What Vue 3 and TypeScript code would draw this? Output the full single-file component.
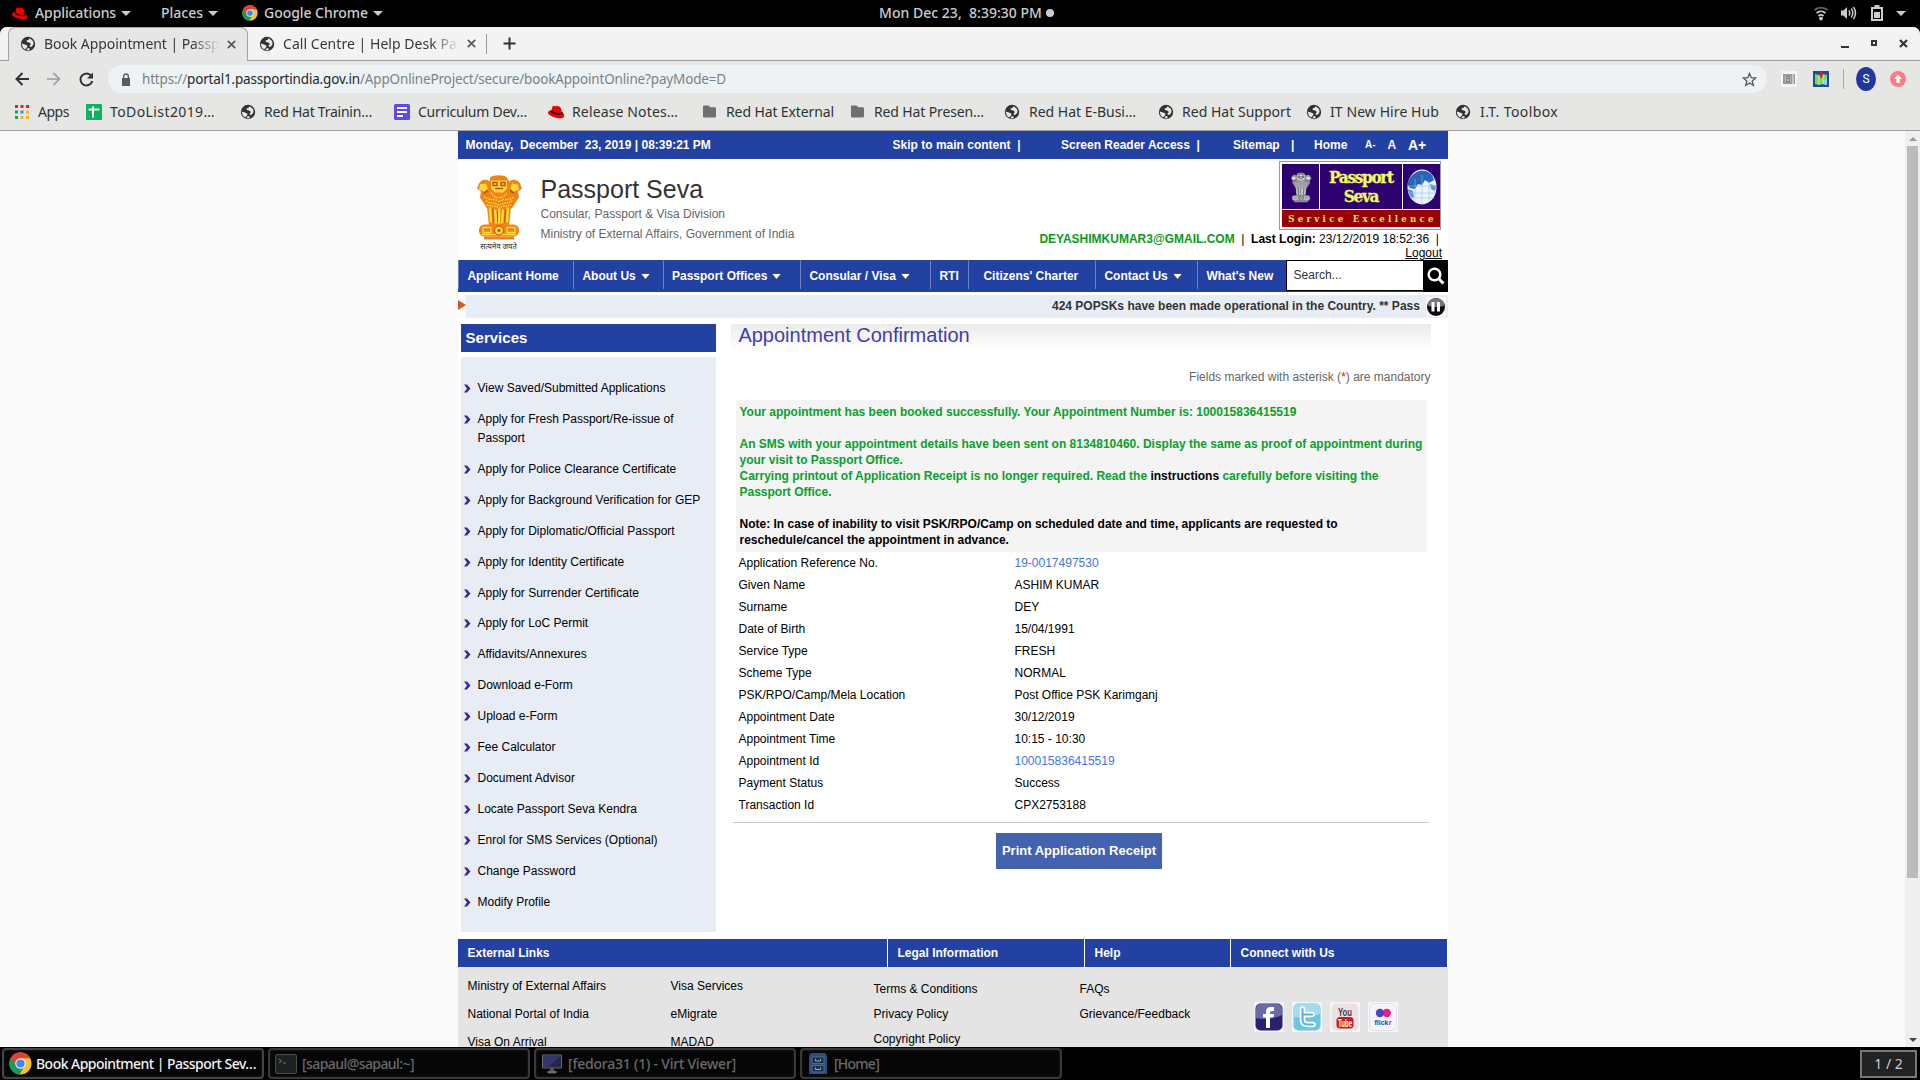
<script setup lang="ts">
type Fit = { text: string; w: number }
type Bookmark = Fit & { icon: 'apps' | 'sheet' | 'globe' | 'doc' | 'hat' | 'folder'; span: number; gap: number }

// Tracks a label in or out so that it fills the given width in pixels.
const vFit = {
  mounted(el: HTMLElement, binding: { value: number }) {
    const count = (el.textContent ?? '').length
    const natural = el.getBoundingClientRect().width
    if (count && natural) el.style.letterSpacing = `${(binding.value - natural) / count}px`
  },
}

const bookmarks: Bookmark[] = [
  { icon: 'apps', text: 'Apps', w: 31, span: 71, gap: 9 },
  { icon: 'sheet', text: 'ToDoList2019…', w: 105, span: 154, gap: 8 },
  { icon: 'globe', text: 'Red Hat Trainin…', w: 108, span: 154, gap: 8 },
  { icon: 'doc', text: 'Curriculum Dev…', w: 109, span: 154, gap: 8 },
  { icon: 'hat', text: 'Release Notes…', w: 106, span: 154, gap: 8 },
  { icon: 'folder', text: 'Red Hat External', w: 108, span: 148, gap: 9 },
  { icon: 'folder', text: 'Red Hat Presen…', w: 110, span: 154, gap: 9 },
  { icon: 'globe', text: 'Red Hat E-Busi…', w: 107, span: 154, gap: 9 },
  { icon: 'globe', text: 'Red Hat Support', w: 109, span: 148, gap: 8 },
  { icon: 'globe', text: 'IT New Hire Hub', w: 109, span: 149, gap: 8 },
  { icon: 'globe', text: 'I.T. Toolbox', w: 78, span: 120, gap: 9 },
]

const nav = [
  { text: 'Applicant Home', w: 115, pad: 8.4, drop: false },
  { text: 'About Us', w: 90, pad: 8.4, drop: true },
  { text: 'Passport Offices', w: 137, pad: 8, drop: true },
  { text: 'Consular / Visa', w: 130, pad: 8.4, drop: true },
  { text: 'RTI', w: 38, pad: 8.4, drop: false },
  { text: "Citizens' Charter", w: 127, pad: 14.4, drop: false },
  { text: 'Contact Us', w: 102, pad: 8.4, drop: true },
  { text: "What's New", w: 89, pad: 8.4, drop: false },
]

const services = [
  'View Saved/Submitted Applications',
  'Apply for Fresh Passport/Re-issue of Passport',
  'Apply for Police Clearance Certificate',
  'Apply for Background Verification for GEP',
  'Apply for Diplomatic/Official Passport',
  'Apply for Identity Certificate',
  'Apply for Surrender Certificate',
  'Apply for LoC Permit',
  'Affidavits/Annexures',
  'Download e-Form',
  'Upload e-Form',
  'Fee Calculator',
  'Document Advisor',
  'Locate Passport Seva Kendra',
  'Enrol for SMS Services (Optional)',
  'Change Password',
  'Modify Profile',
]

const details = [
  { label: 'Application Reference No.', value: '19-0017497530', link: true },
  { label: 'Given Name', value: 'ASHIM KUMAR' },
  { label: 'Surname', value: 'DEY' },
  { label: 'Date of Birth', value: '15/04/1991' },
  { label: 'Service Type', value: 'FRESH' },
  { label: 'Scheme Type', value: 'NORMAL' },
  { label: 'PSK/RPO/Camp/Mela Location', value: 'Post Office PSK Karimganj' },
  { label: 'Appointment Date', value: '30/12/2019' },
  { label: 'Appointment Time', value: '10:15 - 10:30' },
  { label: 'Appointment Id', value: '100015836415519', link: true },
  { label: 'Payment Status', value: 'Success' },
  { label: 'Transaction Id', value: 'CPX2753188' },
]

const footerHeads = [
  { text: 'External Links', w: 430 },
  { text: 'Legal Information', w: 197 },
  { text: 'Help', w: 146 },
  { text: 'Connect with Us', w: 216 },
]

const footerCols = [
  { w: 203, step: 28, top: 9, links: ['Ministry of External Affairs', 'National Portal of India', 'Visa On Arrival'] },
  { w: 203, step: 28, top: 9, links: ['Visa Services', 'eMigrate', 'MADAD'] },
  { w: 206, step: 25, top: 12, links: ['Terms & Conditions', 'Privacy Policy', 'Copyright Policy'] },
  { w: 175, step: 25, top: 12, links: ['FAQs', 'Grievance/Feedback'] },
]
</script>

<template>
  <div class="screen">
    <svg class="defs" width="0" height="0">
      <defs>
        <symbol id="globe" viewBox="0 0 16 16">
          <circle cx="8" cy="8" r="7.2" fill="#2e3436" />
          <path d="M9.6 2.2 13 5l.6 3-1.6 2.6-2 .4-.4-1.6L11 8 9.2 6.4 7 6l-.6-1.6L8.4 4z" fill="#e8e8e7" />
          <path d="M1.6 7.6 5 8.4l2.6 1.4L7 11.4l-2 2.2-2.2-2z M6.4 14.3l1.4-2.2 2 .4-.6 2z" fill="#e8e8e7" />
        </symbol>
        <symbol id="chrome" viewBox="0 0 48 48">
          <circle cx="24" cy="24" r="23" fill="#fbc02d" />
          <path d="M24 24 4 12.5A23 23 0 0 1 44 12.5H24z" fill="#db4437" />
          <path d="M4 12.5A23 23 0 0 0 22 47l10-17.5-8 3.5-8.5-4.5z" fill="#0f9d58" />
          <path d="M4 12.5 15 30 24 13h20A23 23 0 0 0 4 12.5z" fill="#db4437" />
          <circle cx="24" cy="24" r="11" fill="#f1f1f1" />
          <circle cx="24" cy="24" r="8.6" fill="#4285f4" />
        </symbol>
        <symbol id="hat" viewBox="0 0 18 16">
          <path d="M1 8.5c0-1.6 2-2.2 3.4-2l1.2-4C6 1.400 7 1.800 8 2.200c1 .4 1.600-.6 2.800-.3 1.800.4 2.800 1.200 3.200 2.700l.8 3.400c1.500 1 2.700 2.400 2.500 4-.4 2.600-4.200 2.700-7.600 1.900C5.500 12.900 1 11 1 8.500z" fill="#e00" />
          <path d="M4.400 6.500c-.2 2.600 6.500 4.400 9.600 3.600.9-.3 1-1.200.8-2.100" fill="none" class="hat-band" stroke-width="1.500" />
        </symbol>
        <symbol id="folder" viewBox="0 0 15 14">
          <path d="M1 .5h5.500l2 2H13a1.500 1.500 0 0 1 1.500 1.500v8A1.500 1.500 0 0 1 13 13.500H2A1.500 1.500 0 0 1 .5 12V1z" fill="#6b7071" />
        </symbol>
        <symbol id="emblem" viewBox="0 0 48 64">
          <path d="M15 3c3-3 14-3 17 0l2 4c4-3 9-2 11 2l2 5-4 3 1 6-4 6-3 5H12l-3-5-4-6 1-6-4-3 2-5c2-4 7-5 11-2z" fill="var(--e1)" />
          <path d="M12 32h24l-2 20H14z" fill="var(--e1)" />
          <path d="M16 6h16v8l-4 4h-8l-4-4zM5 10l6-1 2 5-4 3-5-2zM43 10l-6-1-2 5 4 3 5-2z" fill="var(--e2)" />
          <path d="M18 8h4v3h-4zM26 8h4v3h-4zM20 14h8M9 19l4-3M39 19l-4-3" fill="none" stroke="var(--e3)" stroke-width="1.300" />
          <path d="M9 22c5 5 9 1 15 5 6-4 10 0 15-5M11 26c4 4 8 1 13 5 5-4 9-1 13-5M12 30c5 3 8 0 12 4 4-4 7-1 12-4M16 18c2 4 5 5 8 5s6-1 8-5" fill="none" stroke="var(--e2)" stroke-width="1.500" stroke-dasharray="1.500 1" />
          <path d="M15 33l1 15M20 35l1 14M24 35v14M28 35l-1 14M33 33l-1 15" fill="none" stroke="var(--e2)" stroke-width="2.500" />
          <path d="M17.500 34l1 14M22.500 36v12M30.500 35l-1 13" fill="none" stroke="var(--e3)" stroke-width=".9" />
          <rect x="4" y="50" width="40" height="12" rx="5.500" fill="var(--e1)" />
          <path d="M9 62h30v3H9z" fill="var(--e1)" />
          <path d="M8 53h8v5H8zM32 53h8v5h-8zM7 60h34" fill="none" stroke="var(--e2)" stroke-width="1.400" />
          <circle cx="24" cy="56" r="4.500" fill="var(--e2)" stroke="var(--e3)" />
          <circle cx="24" cy="56" r="1.500" fill="var(--e3)" />
        </symbol>
      </defs>
    </svg>

    <!-- GNOME panel -->
    <div class="panel">
      <svg class="p-hat" width="17" height="15"><use href="#hat" /></svg>
      <span v-fit="81" class="fit">Applications</span><i class="tri" />
      <span v-fit="42" class="fit places">Places</span><i class="tri" />
      <svg class="p-chrome" width="16" height="16"><use href="#chrome" /></svg>
      <span v-fit="104" class="fit">Google Chrome</span><i class="tri" />
      <div class="clock"><span v-fit="163" class="fit">Mon Dec 23,&nbsp; 8:39:30 PM</span><i /></div>
      <div class="tray">
        <svg width="16" height="16" viewBox="0 0 16 16" fill="none" stroke="#ccc" stroke-width="1.800">
          <path d="M1.500 5.200C5 1.800 11 1.800 14.500 5.200" stroke="#666" />
          <path d="M3.500 8.200c2.600-2.500 6.400-2.500 9 0M5.500 11c1.500-1.400 3.500-1.400 5 0" /><circle cx="8" cy="13.600" r="1" fill="#ccc" />
        </svg>
        <svg width="17" height="16" viewBox="0 0 17 16" fill="none" stroke="#ccc" stroke-width="1.500">
          <path d="M1 5.500h2.500L7 2v12L3.500 10.500H1z" fill="#ccc" stroke="none" /><path d="M9 5.500q1.500 2.500 0 5M11.300 3.500q3 4.500 0 9M13.500 1.800q4 6.200 0 12.400" />
        </svg>
        <svg width="12" height="16" viewBox="0 0 12 16"><path d="M3.500 0h5v2H12v14H0V2h3.500zM2 4v10h8V4z" fill="#ccc" fill-rule="evenodd" /><path d="M3 7h6v6H3z" fill="#ccc" /></svg>
        <i class="tri" />
      </div>
    </div>

    <!-- Browser window -->
    <div class="window">
      <div class="tabs">
        <div class="tab active">
          <svg width="16" height="16"><use href="#globe" /></svg>
          <div class="tab-text"><span v-fit="206" class="fit">Book Appointment | Passport S</span></div>
          <svg class="x" width="9" height="9" viewBox="0 0 9 9"><path d="M.8.8l7.400 7.400M8.200.8.8 8.200" stroke="#55595b" stroke-width="1.700" /></svg>
        </div>
        <div class="tab idle">
          <svg width="16" height="16"><use href="#globe" /></svg>
          <div class="tab-text"><span v-fit="196" class="fit">Call Centre | Help Desk Passp</span></div>
          <svg class="x" width="9" height="9" viewBox="0 0 9 9"><path d="M.8.8l7.400 7.400M8.200.8.8 8.200" stroke="#55595b" stroke-width="1.700" /></svg>
        </div>
        <i class="tab-sep" />
        <svg class="plus" width="13" height="13" viewBox="0 0 13 13"><path d="M6.500.5v12M.5 6.500h12" stroke="#2e3436" stroke-width="2" /></svg>
        <div class="controls">
          <svg width="8" height="10"><path d="M0 8h8v2H0z" fill="#2e3436" /></svg>
          <svg width="6" height="6" viewBox="0 0 6 6"><path d="M1 1h4v4H1z" fill="none" stroke="#2e3436" stroke-width="2" /></svg>
          <svg width="9" height="9" viewBox="0 0 9 9"><path d="M1 1l7 7M8 1 1 8" stroke="#2e3436" stroke-width="2.200" /></svg>
        </div>
      </div>

      <div class="toolbar">
        <svg class="back" width="14" height="14" viewBox="0 0 14 14" fill="none" stroke="#2e3436" stroke-width="2"><path d="M14 7H1.500M7.500 1l-6 6 6 6" /></svg>
        <svg class="fwd" width="14" height="14" viewBox="0 0 14 14" fill="none" stroke="#9b9d9d" stroke-width="1.700"><path d="M0 7h12.500M6.500 1l6 6-6 6" /></svg>
        <svg class="reload" width="15" height="15" viewBox="0 0 15 15"><path d="M12.200 3.700A6 6 0 1 0 13.300 9" fill="none" stroke="#2e3436" stroke-width="2" /><path d="M14 .5v6H8z" fill="#2e3436" /></svg>
        <div class="omnibox">
          <svg class="lock" width="10" height="13" viewBox="0 0 10 13"><path d="M1 5h8v8H1z" fill="#5a5e61" /><path d="M2.700 6V3.300a2.300 2.300 0 0 1 4.600 0V6" fill="none" stroke="#5a5e61" stroke-width="1.400" /></svg>
          <span v-fit="45" class="fit dim">https://</span><span v-fit="173" class="fit host">portal1.passportindia.gov.in</span><span v-fit="366" class="fit dim">/AppOnlineProject/secure/bookAppointOnline?payMode=D</span>
          <svg class="star" width="15" height="15" viewBox="0 0 15 15"><path d="M7.500 1.500 9.200 5.700l4.500.3-3.500 2.900 1.100 4.400-3.800-2.400-3.800 2.400 1.100-4.400L1.300 6l4.500-.3z" fill="none" stroke="#55595c" stroke-width="1.300" /></svg>
        </div>
        <svg class="ext-b" width="16" height="16" viewBox="0 0 16 16"><path d="M0 0h16v16H0z" fill="#f4f4f4" /><path d="M2 3h9.500v10H2zM12.500 3H14v10h-1.500z" fill="#999" /><path d="M4 5h5.500v6H4z" fill="#e4e4e4" /><text x="4" y="11.300" font-size="8.500" font-weight="700" fill="#777">B</text></svg>
        <svg class="ext-m" width="16" height="16" viewBox="0 0 16 16"><path d="M0 0h16v16H0z" fill="#174ea0" /><path d="M2 3l4 1 4-1 4 1v10l-4-1-4 1-4-1z" fill="#7ed957" /><path d="M10 9l4-1v6l-4-1z" fill="#8fd0ff" /><path d="M6 4v10M10 3v10" stroke="#e8ffe0" stroke-width=".6" /><path d="M8.200 8 6.300 3.500a2 2 0 1 1 3.800 0z" fill="#d6201b" /></svg>
        <i class="tb-sep" />
        <span class="avatar">S</span>
        <svg class="update" width="16" height="16" viewBox="0 0 16 16"><circle cx="8" cy="8" r="8" fill="#ff7b84" /><path d="M8 3.500l4 4.300H9.600V12H6.400V7.800H4z" fill="#fff" /></svg>
      </div>

      <div class="bookmarks">
        <div v-for="(b, i) in bookmarks" :key="i" class="bm" :style="{ width: b.span + 'px', columnGap: b.gap + 'px' }">
          <svg v-if="b.icon === 'apps'" width="14" height="14" viewBox="0 0 14 14">
            <path d="M0 0h3v3H0zM5.500 0h3v3h-3zM11 0h3v3h-3z" fill="#ea1f2d" />
            <path d="M0 5.500h3v3H0z" fill="#12a558" /><path d="M5.500 5.500h3v3h-3z" fill="#4688f4" /><path d="M11 5.500h3v3h-3zM5.500 11h3v3h-3zM11 11h3v3h-3z" fill="#f7b42a" /><path d="M0 11h3v3H0z" fill="#12a558" />
          </svg>
          <svg v-else-if="b.icon === 'sheet'" width="16" height="16" viewBox="0 0 16 16"><rect width="16" height="16" rx="1" fill="#0eb25c" /><path d="M2.500 5.500h11M7 2.500v11" stroke="#fff" stroke-width="2" /></svg>
          <svg v-else-if="b.icon === 'doc'" width="16" height="16" viewBox="0 0 16 16"><rect width="16" height="16" rx="1.500" fill="#5b4be8" /><path d="M3 4h10M3 8h10M3 12h6" stroke="#fff" stroke-width="1.900" /></svg>
          <svg v-else-if="b.icon === 'hat'" class="bm-hat" width="18" height="16"><use href="#hat" /></svg>
          <svg v-else-if="b.icon === 'folder'" width="15" height="13"><use href="#folder" /></svg>
          <svg v-else width="16" height="16"><use href="#globe" /></svg>
          <span v-fit="b.w" class="fit">{{ b.text }}</span>
        </div>
      </div>

      <!-- Page -->
      <div class="viewport">
        <div class="page">
          <div class="topline">
            <span class="date">Monday,&nbsp; December&nbsp; 23, 2019 | 08:39:21 PM</span>
            <span class="t-skip">Skip to main content&nbsp; |</span>
            <span class="t-reader">Screen Reader Access&nbsp; |</span>
            <span class="t-map">Sitemap</span><span class="t-bar">|</span>
            <span class="t-home">Home</span>
            <span class="a-small">A-</span><span class="a-mid">A</span><span class="a-big">A+</span>
          </div>

          <div class="header">
            <div class="crest">
              <svg width="48" height="69"><use href="#emblem" width="48" height="69" /></svg>
              <small>सत्यमेव जयते</small>
            </div>
            <div class="brand">
              <h1>Passport Seva</h1>
              <p>Consular, Passport &amp; Visa Division</p>
              <p>Ministry of External Affairs, Government of India</p>
            </div>
            <div class="account">
              <div class="logo">
                <div class="cell lion"><svg width="22" height="38"><use href="#emblem" width="22" height="38" /></svg></div>
                <div class="cell name">Passport<br />Seva</div>
                <div class="cell globe">
                  <svg width="30" height="36" viewBox="0 0 30 36">
                    <ellipse cx="15" cy="18" rx="14.500" ry="17.500" fill="#e9f3fb" />
                    <path d="M3 9C8 1 19-1 25 6l2 5-5 3-4-3-3 5-4-1-3 5-5-1-3-4z" fill="#2a63b8" />
                    <path d="M1 20l5 2 1 6-2 1C2 26 1 23 1 20zM23 15l6 2-1 5-4-2z" fill="#5a94d4" />
                    <path d="M8 34V10M15 35V6M22 33V12M1 24h28M3 29h24M1 17h28" stroke="#9cc3e6" stroke-width=".6" fill="none" />
                  </svg>
                </div>
                <div class="cell motto">Service Excellence</div>
              </div>
              <p class="login"><b class="mail">DEYASHIMKUMAR3@GMAIL.COM</b><span>&nbsp; |&nbsp; </span><b>Last Login:</b> 23/12/2019 18:52:36&nbsp; |<span class="endpad" /></p>
              <p class="logout">Logout</p>
            </div>
          </div>

          <div class="nav">
            <div v-for="n in nav" :key="n.text" class="nav-item" :style="{ width: n.w + 'px', paddingLeft: n.pad + 'px' }">
              {{ n.text }}<svg v-if="n.drop" width="11" height="7" viewBox="0 0 11 7"><path d="M.5.500h10l-5 6z" fill="#fff" stroke="#333" stroke-width=".8" /></svg>
            </div>
            <div class="search">Search...</div>
            <div class="go"><svg width="18" height="18" viewBox="0 0 18 18" fill="none" stroke="#fff"><circle cx="7.500" cy="7.500" r="5.800" stroke-width="2.400" /><path d="M11.800 11.800l4.700 4.700" stroke-width="3" /></svg></div>
          </div>

          <div class="ticker">
            <div class="flag"><svg width="8" height="10"><path d="M0 0l8 5-8 5z" fill="#cf5a28" /></svg></div>
            <span>424 POPSKs have been made operational in the Country. ** Pass</span>
            <svg width="20" height="20" viewBox="0 0 20 20"><path d="M0 0h20v20H0z" fill="#f4f6f9" /><circle cx="10" cy="10" r="9" fill="#0c0c0c" /><path d="M1.500 8.500a8.600 8.600 0 0 1 17 0q-8.500 3-17 0z" fill="#777" /><path d="M7 5v9.500M12.500 5v9.500" stroke="#fff" stroke-width="3" /></svg>
          </div>

          <div class="columns">
            <div class="side">
              <h2>Services</h2>
              <ul>
                <li v-for="s in services" :key="s"><svg width="7" height="9" viewBox="0 0 7 9"><path d="M0 .5h3L6.500 4.500 3 8.500H0l3-4z" fill="#3a2a96" /></svg><span>{{ s }}</span></li>
              </ul>
            </div>
            <div class="main">
              <h2>Appointment Confirmation</h2>
              <p class="hint">Fields marked with asterisk (<em>*</em>) are mandatory</p>
              <div class="notice">
                Your appointment has been booked successfully. Your Appointment Number is: 100015836415519<br /><br />
                An SMS with your appointment details have been sent on 8134810460. Display the same as proof of appointment during<br />your visit to Passport Office.<br />
                Carrying printout of Application Receipt is no longer required. Read the <b>instructions</b> carefully before visiting the<br />Passport Office.<br /><br />
                <b>Note: In case of inability to visit PSK/RPO/Camp on scheduled date and time, applicants are requested to<br />reschedule/cancel the appointment in advance.</b>
              </div>
              <div class="details">
                <div v-for="d in details" :key="d.label" class="row"><span>{{ d.label }}</span><span :class="{ link: d.link }">{{ d.value }}</span></div>
              </div>
              <div class="actions"><button>Print Application Receipt</button></div>
            </div>
          </div>

          <div class="foot-head"><div v-for="h in footerHeads" :key="h.text" :style="{ width: h.w + 'px' }">{{ h.text }}</div></div>
          <div class="foot">
            <div v-for="(c, i) in footerCols" :key="i" :style="{ width: c.w + 'px', paddingTop: c.top + 'px' }">
              <p v-for="l in c.links" :key="l" :style="{ height: c.step + 'px' }">{{ l }}</p>
            </div>
            <div class="social">
              <svg width="30" height="30" viewBox="0 0 30 30"><path d="M0 0h30v30H0z" fill="#f4f4f7" /><rect x="1.500" y="1.500" width="27" height="27" rx="5" fill="#2a2070" /><path d="M2 7q0-5 5-5h16q5 0 5 5v6q-13 6-26 3z" fill="#6b6aa6" /><path d="M12 26V15.500H9V12h3V9.500Q12 5 16.500 5H20v4h-2q-2 0-2 1.500V12h4l-.6 3.500H16V26z" fill="#fff" /></svg>
              <svg width="30" height="30" viewBox="0 0 30 30"><path d="M0 0h30v30H0z" fill="#f1f6f8" /><rect x="1.500" y="1.500" width="27" height="27" rx="5" fill="#6dc6e0" /><path d="M2 7q0-5 5-5h16q5 0 5 5v5q-13 5-26 3z" fill="#a5dbea" /><path d="M10.500 7v10.500q0 5 5 5H21M10.500 12.500H20" fill="none" stroke="#fff" stroke-width="5.500" stroke-linecap="round" /><path d="M10.500 7v10.500q0 5 5 5H21M10.500 12.500H20" fill="none" stroke="#52b9d8" stroke-width="2.200" stroke-linecap="round" /></svg>
              <svg width="30" height="30" viewBox="0 0 30 30"><path d="M0 0h30v30H0z" fill="#faf4f5" /><rect x="1.500" y="1.500" width="27" height="27" rx="5" fill="#e9e2e4" /><rect x="6.500" y="15" width="17" height="11.500" rx="3.500" fill="#c01c26" /><text x="15" y="14" text-anchor="middle" font-size="11" textLength="14" lengthAdjust="spacingAndGlyphs" font-weight="700" fill="#4c3336">You</text><text x="15" y="24.500" text-anchor="middle" font-size="10" textLength="14" lengthAdjust="spacingAndGlyphs" font-weight="700" fill="#fff">Tube</text></svg>
              <svg width="30" height="30" viewBox="0 0 30 30"><path d="M0 0h30v30H0z" fill="#faf6fa" /><rect x="1.500" y="1.500" width="27" height="27" rx="5" fill="#f7f3fa" stroke="#e6dde8" /><circle cx="18.800" cy="11" r="4.200" fill="#ec1f87" /><circle cx="12" cy="11" r="4.200" fill="#5244c0" /><text x="6.500" y="23" font-size="8" textLength="14" lengthAdjust="spacingAndGlyphs" font-weight="700" fill="#2b3fa8">flick</text><text x="20.700" y="23" font-size="8" font-weight="700" fill="#ec1f87">r</text></svg>
            </div>
          </div>
        </div>
        <div class="scrollbar"><i class="up" /><i class="thumb" /><i class="down" /></div>
      </div>
    </div>

    <!-- Window list -->
    <div class="tasks">
      <div class="task on"><svg width="23" height="23"><use href="#chrome" /></svg><span v-fit="220" class="fit">Book Appointment | Passport Sev…</span></div>
      <div class="task"><svg width="22" height="20" viewBox="0 0 22 20"><rect x=".5" y=".5" width="21" height="19" rx="1.500" fill="#1d2223" stroke="#4a4d4e" /><path d="M4 5l2.500 2L4 9M8 9h3" stroke="#777" fill="none" /></svg><span v-fit="112" class="fit">[sapaul@sapaul:~]</span></div>
      <div class="task wide"><svg width="20" height="20" viewBox="0 0 20 20"><path d="M.5 1h19v13H.5z" fill="#24264f" stroke="#66686a" /><path d="M1 1.500h18L6 13.500H1z" fill="#34366a" /><path d="M8 14h4v3H8z" fill="#555" /><ellipse cx="10" cy="18" rx="5" ry="1.500" fill="#66686a" /></svg><span v-fit="168" class="fit">[fedora31 (1) - Virt Viewer]</span></div>
      <div class="task home"><svg width="18" height="21" viewBox="0 0 18 21"><path d="M2 0h14l2 2.500V21H0V2.500z" fill="#2c4d78" /><path d="M3 4h12v6.500H3zM3 12.500h12V19H3z" fill="#1b2f4d" stroke="#4b6f9c" /><path d="M6.500 6v2h5V6M6.500 14.500v2h5v-2" fill="none" stroke="#aaa" /></svg><span v-fit="45" class="fit">[Home]</span></div>
      <div class="pager">1 / 2</div>
    </div>
  </div>
</template>

<style>
body { margin: 0; background: #000; overflow: hidden; }
</style>

<style scoped>
* { box-sizing: border-box; }
.screen { width: 1920px; height: 1080px; overflow: hidden; display: flex; flex-direction: column; background: #000; font: 14px/20px "Noto Sans", "Open Sans", sans-serif; }
.defs { position: absolute; }
svg { display: block; flex: none; }
p, h1, h2, ul { margin: 0; padding: 0; font-weight: 400; }
.fit { display: inline-block; white-space: pre; flex: none; }
.hat-band { stroke: #111; }

.panel { height: 27px; flex: none; display: flex; align-items: center; color: #ccc; font-weight: 500; padding: 0 14px 1px 11px; }
.p-hat { margin-right: 7px; }
.tri { width: 0; height: 0; border: 5px solid transparent; border-top-color: #ccc; border-bottom: 0; margin-left: 5px; }
.places { margin-left: 30px; }
.p-chrome { margin: 0 6px 0 24px; }
.clock { margin-left: 496px; display: flex; align-items: center; }
.clock i { width: 8px; height: 8px; border-radius: 50%; background: #ccc; margin-left: 4px; }
.tray { margin-left: auto; display: flex; align-items: center; }
.tray svg:nth-child(2) { margin-left: 11px; }
.tray svg:nth-child(3) { margin-left: 14px; }
.tray .tri { margin-left: 13px; }

.window { height: 1020px; flex: none; display: flex; flex-direction: column; background: #e6e6e4; border-radius: 7px 7px 0 0; overflow: hidden; color: #2e3436; }
.tabs { height: 34px; flex: none; display: flex; background: linear-gradient(#f3f3f3 32px, #e2e2e6 33px, #9c9c9f 33px); }
.tab { display: flex; align-items: center; height: 34px; padding-bottom: 1px; }
.tab.active { width: 240px; margin-left: 8px; padding: 0 11px 1px; background: #e6e6e4; border: 1px solid #a2a2a2; border-bottom: 0; border-radius: 7px 7px 0 0; }
.tab.idle { width: 229px; padding-left: 11px; }
.tab-text { width: 176px; margin-left: 8px; overflow: hidden; color: #33393b; -webkit-mask-image: linear-gradient(90deg, #000 148px, transparent 176px); mask-image: linear-gradient(90deg, #000 148px, transparent 176px); }
.x { margin-left: 8px; }
.tab-sep { width: 1px; height: 20px; margin: 7px 0 0 9px; background: #999; }
.plus { margin: 10px 0 0 16px; }
.controls { margin: 0 12px 0 auto; display: flex; align-items: center; height: 32px; }
.controls svg:nth-child(2) { margin-left: 22px; }
.controls svg:nth-child(3) { margin-left: 22px; }

.toolbar { height: 36px; flex: none; display: flex; align-items: center; padding-left: 15px; }
.fwd { margin-left: 18px; }
.reload { margin-left: 18px; }
.omnibox { width: 1659px; height: 28px; margin-left: 14px; border-radius: 14px; background: #edf2f4; display: flex; align-items: center; padding-left: 13px; font-size: 13.5px; }
.lock { margin-right: 11px; }
.dim { color: #7d8284; }
.host { color: #24292b; }
.star { margin: 0 10px 0 auto; }
.ext-b { margin-left: 14px; }
.ext-m { margin-left: 16px; }
.tb-sep { width: 1px; height: 20px; background: #aaa; margin-left: 14px; }
.avatar { width: 20px; height: 24px; margin-left: 12px; border-radius: 50%; background: #22379b; color: #fff; font: 12px/24px Roboto, sans-serif; text-align: center; }
.update { margin-left: 14px; }

.bookmarks { height: 34px; flex: none; display: flex; align-items: center; padding: 0 0 4px 15px; border-bottom: 1px solid #a0a0a0; }
.bm { display: flex; align-items: center; flex: none; }
.bm-hat { margin: 0 -1px 0 -1px; }

.viewport { height: 916px; display: flex; background: #fafafa; overflow: hidden; color: #000; font: 12px/16px "Liberation Sans", Arial, sans-serif; }
.page { width: 990px; height: 916px; margin-left: 458px; background: #fff; overflow: hidden; flex: none; }
.scrollbar { width: 15px; margin-left: auto; background: #efefef; display: flex; flex-direction: column; align-items: center; }
.scrollbar .thumb { width: 11px; height: 732px; background: #bbb; margin-top: 5px; }
.up { border: 4px solid transparent; border-top: 0; border-bottom-color: #999; margin-top: 6px; }
.down { border: 4px solid transparent; border-bottom: 0; border-top-color: #444; margin: auto 0 5px; }

.topline { height: 28px; display: flex; align-items: center; background: #2340a3; color: #fff; font-weight: 700; padding-left: 7.6px; white-space: nowrap; }
.date { width: 427px; }
.t-skip { width: 168.4px; }
.t-reader { width: 172px; }
.t-map { width: 58px; }
.t-bar { width: 23px; }
.t-home { width: 51px; }
.a-small { width: 22.600px; font-size: 10px; }
.a-mid { width: 20.400px; }
.a-big { font-size: 14px; }

.header { height: 101px; display: flex; }
.crest { width: 48px; margin: 13px 18px 0 16.500px; --e1: #ee8418; --e2: #ffd83a; --e3: #b84a10; }
.crest small { display: block; font: 7.5px/10px "Noto Sans", sans-serif; text-align: center; white-space: nowrap; color: #222; }
.brand { padding-top: 16px; color: #666; }
.brand h1 { font-size: 25px; line-height: 28px; color: #333; }
.brand p { line-height: 20px; }
.brand h1 + p { margin-top: 1px; }
.account { margin-left: auto; padding: 2px 6px 0 0; display: flex; flex-direction: column; align-items: flex-end; }
.logo { width: 162px; height: 69px; flex: none; margin-right: 1px; padding: 2px; border: 1px solid #999; background: #fff; display: grid; grid-template: 45px 17px / 37px 82px 37px; gap: 1px; }
.cell { background: #2d006f; display: flex; align-items: center; justify-content: center; text-align: center; overflow: hidden; }
.lion { --e1: #8f8f95; --e2: #d8d8dc; --e3: #222; }
.name { color: #f4fa62; font: 700 17px/19px "DejaVu Serif Condensed", "DejaVu Serif", serif; letter-spacing: -1.300px; -webkit-text-stroke: .3px #f4fa62; }
.motto { grid-column: 1 / 4; background: #990000; color: #f2e25c; font: 700 9.500px/17px "DejaVu Serif Condensed", "DejaVu Serif", serif; letter-spacing: 3.300px; padding-left: 3px; white-space: nowrap; }
.login { margin-top: 1px; line-height: 16px; white-space: nowrap; }
.endpad { display: inline-block; width: 3px; }
.mail { color: #0a9a1e; }
.logout { line-height: 14px; margin-top: -1px; text-decoration: underline; }

.nav { height: 32px; display: flex; background: #2340a3; color: #fff; font-weight: 700; }
.nav-item { height: 29px; border-left: 1px solid #6a80b8; display: flex; align-items: center; padding-top: 2px; white-space: nowrap; flex: none; }
.nav-item svg { margin: 2px 0 0 4px; }
.search { width: 137px; height: 31px; border: 1px solid #000; border-right: 0; background: #fff; color: #333; font-weight: 400; line-height: 29px; padding-left: 6.600px; flex: none; }
.go { flex: 1; background: #000; display: flex; align-items: center; justify-content: center; }

.ticker { height: 23px; margin-top: 3px; background: #e8edf5; display: flex; align-items: center; color: #333; font-weight: 700; }
.flag { width: 8px; height: 23px; background: #fbfaf8; display: flex; align-items: center; margin-right: auto; padding-bottom: 3px; }
.ticker > span { width: 367px; margin: 0 7px 2px 0; white-space: nowrap; }
.ticker > svg { margin-right: 2px; }

.columns { display: flex; height: 615px; margin-top: 6px; padding-left: 3px; }
.side { width: 255px; }
.side h2 { height: 28px; margin-bottom: 5px; background: #2340a3; color: #fff; font-size: 15px; font-weight: 700; line-height: 27px; padding-left: 4.600px; }
.side ul { height: 575px; background: #e8edf5; list-style: none; padding: 21.900px 0 0 3px; }
.side li { display: flex; margin-bottom: 11.940px; line-height: 19px; }
.side li svg { margin: 5px 6.500px 0 0; }
.side li span { width: 230px; padding-right: 5px; }
.main { width: 700px; margin-left: 15px; }
.main h2 { height: 27px; padding-left: 7.400px; font-size: 20px; line-height: 22px; color: #3f40ab; background: linear-gradient(#ebebeb, #fff 26px); }
.hint { margin-top: 18px; padding-right: .5px; text-align: right; color: #666; }
.hint em { color: #f00; font-style: normal; }
.notice { width: 691px; height: 152px; margin: 15px 0 0 5px; padding: 4px 0 0 3.500px; background: #f4f4f4; color: #0aa02c; font-weight: 700; white-space: nowrap; }
.notice b { color: #000; }
.details { width: 696px; height: 271px; margin-left: 2px; border-bottom: 1px solid #c8c8c8; }
.row { display: flex; height: 22px; line-height: 22px; padding-left: 5.500px; }
.row span:first-child { width: 276px; }
.link { color: #3f76e4; }
.actions { padding: 10px 0 0 265px; }
.actions button { width: 166px; height: 36px; border: 0; padding: 0; background: #4463ae; color: #fff; font: 700 13px/36px "Liberation Sans", Arial, sans-serif; white-space: nowrap; }

.foot-head { height: 28px; width: 989px; display: flex; color: #fff; font-weight: 700; background: #2340a3; }
.foot-head div { line-height: 28px; padding-left: 9.500px; border-right: 1px solid #fff; flex: none; }
.foot-head div:last-child { border: 0; }
.foot { height: 90px; display: flex; background: #e4e4e4; padding-left: 9.500px; }
.foot > div { flex: none; }
.foot p { line-height: 20px; }
.foot .social { display: flex; gap: 8px; padding-top: 35px; margin-left: -.5px; }

.tasks { height: 33px; display: flex; align-items: center; padding: 0 3px 0 2px; gap: 4px; }
.task { width: 262px; height: 31px; border: 2px solid #383838; border-radius: 4px; background: #060606; box-shadow: inset 0 0 3px #222; display: flex; align-items: center; padding-left: 5px; gap: 5px; color: #6a6a6a; font-weight: 500; }
.task.on { color: #f2f2f2; border-color: #444; gap: 4px; }
.task.wide { padding-left: 6px; gap: 6px; }
.task.home { padding-left: 7px; gap: 7px; }
.pager { margin-left: auto; width: 57px; height: 28px; border: 2px solid #777; background: #222; color: #ccc; text-align: center; line-height: 24px; }
</style>
